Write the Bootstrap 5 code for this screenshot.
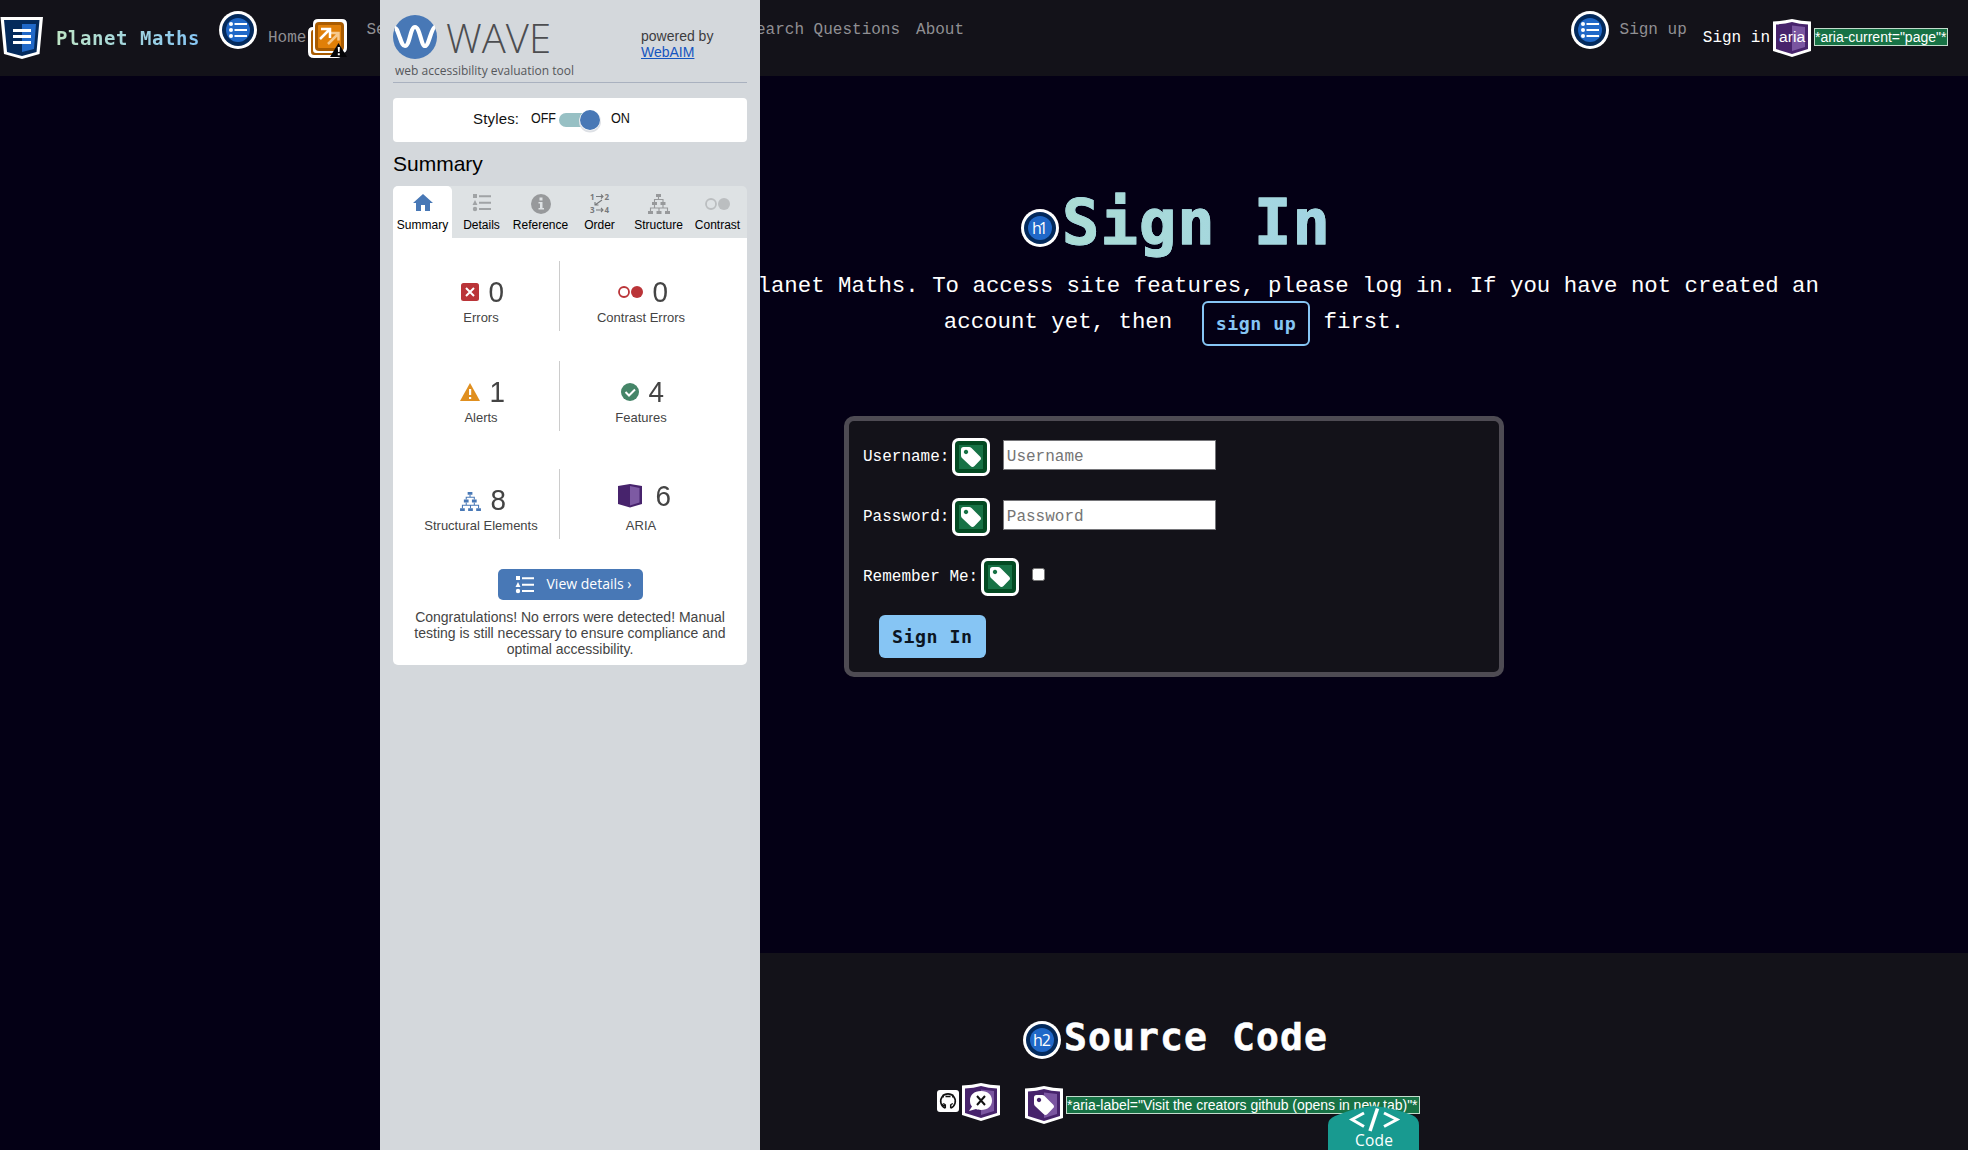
<!DOCTYPE html>
<html lang="en">
<head>
<meta charset="utf-8">
<title>Planet Maths - Sign In</title>
<link href="https://cdn.jsdelivr.net/npm/bootstrap@5.3.0/dist/css/bootstrap.min.css" rel="stylesheet">
<style>
body{background:#040015;color:#fff;font-family:"Liberation Mono",monospace;font-size:16px;height:1150px;overflow:hidden}
svg{flex:none;display:block}
.ic{width:38px;height:38px}
.topnav{background:#131219;height:76px}
.site-name{font:bold 19px/30px "DejaVu Sans Mono",monospace;letter-spacing:.56px;padding:23px 0 0 13px;width:163px}
.site-name span{background:linear-gradient(90deg,#bfe5c6,#86c5f4);-webkit-background-clip:text;color:transparent}
.nav-txt{color:#908f93;line-height:24px;padding-top:18px}
.nav-low{padding-top:26px}
.note-tag{background:#177245;border:1px solid #c3dccd;color:#fff;font:14px/16px "Liberation Sans",sans-serif;white-space:nowrap;height:18px;overflow:hidden;letter-spacing:-.02px}
.page-body{margin-left:380px;height:877px}
.hero-title{font:bold 62px/76px "DejaVu Sans Mono",monospace;letter-spacing:1.07px;margin:0;padding-top:1px}
.hero-title span{background:linear-gradient(90deg,#abdcd4,#a1d4e4);-webkit-background-clip:text;color:transparent;-webkit-text-stroke:1px #a6d8dc}
.intro{font-size:22.4px;line-height:36px;margin:0 auto;width:1300px}
.line-one{padding-right:5px}
.line-two{height:45px}
.line-two>span{padding-top:3px}
.btn-line{border:2px solid #86c5f4;color:#86c5f4;font:bold 18.3px/28.8px "DejaVu Sans Mono",monospace;letter-spacing:.5px;border-radius:6px;padding:7px 12px 5px;margin:0 13.4px 0 29.4px}
.login-card{width:660px;height:261px;border:5px solid #4e4b53;border-radius:10px;background:#131219;margin:70px auto 0;padding:17px 14px}
.login-card .fld{height:60px}
.login-card label{line-height:24px;padding-top:7px;margin-right:2.4px}
.fld input[type=text]{width:213px;height:30px;border:1px solid #76767a;border-radius:0;background:#fff;padding:3px 3px 0;margin:2px 0 0 13px;color:#222}
.fld input::placeholder{color:#757575;opacity:1}
.chk{width:13px;height:13px;background:#fff;border:1px solid #767676;border-radius:2.5px;margin:10px 0 0 13px}
.btn-fill{background:#86c5f4;color:#0b1522;font:bold 18.3px/28.8px "DejaVu Sans Mono",monospace;letter-spacing:.5px;border-radius:6px;padding:8px 13px 6px;border:0;margin:-3px 0 0 16px;height:43px}
.foot{margin-left:380px;background:#131219;height:197px}
.foot h2{font:bold 38px/48px "DejaVu Sans Mono",monospace;letter-spacing:1.12px;margin:0;-webkit-text-stroke:.6px #fff}
.wave{position:absolute;left:380px;top:0;width:380px;height:1150px;background:#d4d8dc;padding:0 13px;color:#444;font-family:"Liberation Sans",sans-serif}
.wave-head{height:83px;border-bottom:1px solid #a9b1bf}
.powered{font-size:14px;line-height:16px;padding-top:28px;width:106px;color:#3c3c3f}
.powered a{color:#1455c0}
.switch-box{background:#fff;height:44px;border-radius:4px;margin-top:15px;color:#111}
.sum-title{font-size:21px;line-height:25px;color:#000;margin:9px 0 10px}
.tabs6{background:#dee2e4;border-radius:5px 5px 0 0;height:52px}
.tabs6>div{width:59px;font-size:12px;line-height:14px;color:#000;padding-top:6px;white-space:nowrap}
.tabs6>div:first-child{background:#fff;border-radius:5px 5px 0 0}
.tabs6 svg{height:24px;margin-bottom:2px}
.panel{background:#fff;height:427px;border-radius:0 0 5px 5px;padding-top:23px}
.pair{height:70px;margin-bottom:30px}
.pair>div{width:162px}
.pair .stem{border-right:1px solid #ccc;width:167px;height:70px;padding-left:10px}
.pair .stem,.pair .side{padding-top:16px}
.num{font-size:30px;line-height:30px;color:#444;margin-left:9px;display:inline-block;transform:scaleX(.93)}
.cap{font-size:13px;line-height:18px;margin-top:2px}
.details-btn{background:#4878b6;color:#fff;width:145px;height:31px;border-radius:5px;font:14px/28px "Open Sans",sans-serif;margin:0 auto 9px;padding-left:17px}
.congrats{font-size:14px;line-height:16px;text-align:center;white-space:nowrap}
.code-tab{position:absolute;left:1328px;top:1106px;width:92px;height:44px}
</style>
</head>
<body class="position-relative">
<svg width="0" height="0" class="position-absolute">
<symbol id="list" viewBox="0 0 38 38"><circle cx="19" cy="19" r="19" fill="#fff"/><circle cx="19" cy="19" r="16" fill="#042a5c"/><circle cx="19" cy="19" r="12" fill="#2068c8"/><g fill="#fff"><circle cx="12" cy="13" r="2"/><circle cx="12" cy="19" r="2"/><circle cx="12" cy="25" r="2"/><path d="M15.500 12h12.500v2h-12.500zM15.500 18h12.500v2h-12.500zM15.500 24h12.500v2h-12.500z"/></g></symbol>
<symbol id="head" viewBox="0 0 38 38"><circle cx="19" cy="19" r="19" fill="#fff"/><circle cx="19" cy="19" r="16" fill="#042a5c"/><circle cx="19" cy="19" r="12" fill="#2068c8"/></symbol>
<symbol id="shield" viewBox="0 0 38 38"><path d="M0 2.500Q10 2 19 0Q28 2 38 2.500V32L19 38 0 32Z" fill="#fff"/><path d="M3 5.500Q12 5 19 3Q26 5 35 5.500V30L19 35 3 30Z" fill="#47236c"/><path d="M19 6.500L32 8v20L19 32Z" fill="#7a55a0"/></symbol>
<symbol id="tagshape" viewBox="0 0 38 38"><path fill="#fff" fill-rule="evenodd" d="M11.500 9H17Q18.500 9 19.500 10L28 18.500Q30 20.500 28 22.300L22.500 28Q20.500 30 18.500 28L10 20Q9 19 9 17.500V11.500Q9 9 11.500 9ZM14 11.800a2.200 2.200 0 1 0 .01 0Z"/></symbol>
<symbol id="label" viewBox="0 0 38 38"><rect width="38" height="38" rx="6.500" fill="#fff"/><rect x="3" y="3" width="32" height="32" rx="4" fill="#034a22"/><rect x="7" y="7" width="24" height="24" fill="#177245"/><use href="#tagshape"/></symbol>
<symbol id="tree" viewBox="0 0 22 20"><path d="M8 0h5v3H8zM4 8h5v3H4zM12.500 8h5v3h-5zM0 17h5v3H0zM8.500 17h5v3h-5zM17 17h5v3h-5z" fill="currentColor"/><path d="M10.500 3v2.500M6.500 8V5.500h8.500V8M6.500 11v3M15 11v3M2.500 17V14h17v3M11 14v3" stroke="currentColor" stroke-width="1.100" fill="none"/></symbol>
<symbol id="rows" viewBox="0 0 20 18"><path d="M1 0h4v4H1zM3 6l2.500 5h-5zM7 1.200h12v2H7zM7 7.700h12v2H7zM7 14h12v2H7z" fill="currentColor"/><circle cx="3" cy="15" r="2.200" fill="currentColor"/></symbol>
</svg>

<nav class="topnav d-flex align-items-start">
  <svg width="43" height="43" viewBox="0 0 43 43" style="margin-top:17px"><path d="M.5 0h42.500l-3.500 37-17.500 5-18-5Z" fill="#fff"/><path d="M4 3h35.500l-3 32-14.500 4-15-4Z" fill="#042a5c"/><path d="M22 7h14l-2 25-12 3Z" fill="#2068c8"/><path d="M13 12h18v3H13zM13 18h18v3H13zM13 24h18v3H13z" fill="#fff"/></svg>
  <div class="site-name text-nowrap"><span>Planet Maths</span></div>
  <svg class="ic" style="margin:11px 11px 0 13px"><use href="#list"/></svg>
  <span class="nav-txt nav-low">Home</span>
  <svg width="39" height="39" viewBox="0 0 39 39" style="margin:19px 19px 0 2px"><path d="M0 13Q0 8 5 8V5Q5 0 10 0h24q5 0 5 5v24q0 5-5 5 0 5-5 5H6q-6 0-6-6Z" fill="#fff"/><path d="M5 11Q3 11 3 14V33Q3 36 6 36H27Q29 36 29 34H8Q5 34 5 31Z" fill="#a95b00"/><rect x="7" y="3" width="29" height="29" rx="4" fill="#a95b00"/><rect x="10" y="6" width="23" height="23" rx="1" fill="#e07f08"/><path d="M20 25L30 15M23 14h7.500v7.500" fill="none" stroke="#f6c98e" stroke-width="2.500"/><path d="M12 20L21 11M13 10h9v9" fill="none" stroke="#fff" stroke-width="2.500"/><path d="M30.500 24l8.500 14H22Z" fill="#050508"/><path d="M29.700 28h2.200l-.4 5h-1.400zM29.800 34.300h2v2h-2z" fill="#fff"/></svg>
  <span class="nav-txt text-nowrap" style="width:380px">Se</span>
  <span class="nav-txt text-nowrap">Search Questions</span>
  <span class="nav-txt" style="margin-left:16px">About</span>
  <div class="d-flex align-items-start ms-auto" style="padding-right:20px">
    <svg class="ic" style="margin:11px 11px 0 0"><use href="#list"/></svg>
    <span class="nav-txt" style="margin-right:16px">Sign up</span>
    <span class="nav-txt nav-low text-white">Sign in</span>
    <svg class="ic" style="margin:19px 3px 0 3px"><use href="#shield"/><text x="19" y="23" text-anchor="middle" font-family="Liberation Sans" font-size="15.500" textLength="26" fill="#fff">aria</text></svg>
    <span class="note-tag" style="margin-top:28px;width:134px">*aria-current="page"*</span>
  </div>
</nav>

<main class="page-body">
  <div class="d-flex justify-content-center align-items-start" style="padding:108px 0 0 4px;height:192px">
    <svg class="ic" style="margin:25px 3px 0 0"><use href="#head"/><text x="19" y="24.500" text-anchor="middle" font-family="Open Sans" font-size="16" textLength="16" fill="#fff">h1</text></svg>
    <h1 class="hero-title"><span>Sign In</span></h1>
  </div>
  <div class="intro line-one text-end text-nowrap">lanet Maths. To access site features, please log in. If you have not created an</div>
  <div class="intro line-two d-flex justify-content-center align-items-start" style="margin-top:-3px">
    <span>account yet, then</span><a class="btn btn-line" href="#">sign up</a><span>first.</span>
  </div>
  <form class="login-card">
    <div class="fld d-flex align-items-start"><label>Username:</label><svg class="ic"><use href="#label"/></svg><input type="text" placeholder="Username"></div>
    <div class="fld d-flex align-items-start"><label>Password:</label><svg class="ic"><use href="#label"/></svg><input type="text" placeholder="Password"></div>
    <div class="fld d-flex align-items-start"><label>Remember Me:</label><svg class="ic"><use href="#label"/></svg><span class="chk"></span></div>
    <button type="button" class="btn-fill">Sign In</button>
  </form>
</main>

<footer class="foot">
  <div class="d-flex justify-content-center align-items-start" style="padding:60px 0 0 3px;height:130px">
    <svg class="ic" style="margin:8px 3px 0 0"><use href="#head"/><text x="19" y="24.500" text-anchor="middle" font-family="Open Sans" font-size="16" textLength="18" fill="#fff">h2</text></svg>
    <h2>Source Code</h2>
  </div>
  <div class="d-flex align-items-start" style="padding-left:557px">
    <svg width="22" height="22" viewBox="0 0 22 22" style="margin:7px 3px 0 0"><rect width="22" height="22" rx="3" fill="#fff"/><path d="M8.300 18.300v-2.700c-2.500.5-2.700-1-3.500-1.500M8.300 16v-1.500M13.700 18.300v-3.800" fill="none" stroke="#111" stroke-width="1.500"/><path d="M8.300 18A7.300 7.300 0 1 1 13.700 18" fill="none" stroke="#111" stroke-width="1.600"/><path d="M6.300 5.300l2.500 1.200h4.400l2.500-1.200.3 3-.7 4-2 2H8.700l-2-2-.7-4Z" fill="#fff"/><path d="M6.300 4.500v3M15.700 4.500v3M8.500 6.500h5M8.500 14.800L6.200 13.500M13.500 14.800l2.300-1.300" stroke="#111" stroke-width="1.300"/></svg>
    <svg class="ic"><use href="#shield"/><path d="M19 8c7 0 11 4 11 9.500S26 27 19 27c-2 0-3.500-.3-5-.9L7 28l3-4.500C8.500 22 8 20 8 17.500 8 12 12 8 19 8Z" fill="#fff"/><path d="M15 13l8 9M23 13l-8 9" stroke="#111" stroke-width="2"/></svg>
    <svg class="ic" style="margin:3px 3px 0 25px"><use href="#shield"/><use href="#tagshape"/></svg>
    <span class="note-tag" style="margin-top:13px;width:354px">*aria-label="Visit the creators github (opens in new tab)"*</span>
  </div>
</footer>

<aside class="wave">
  <div class="wave-head d-flex justify-content-between">
    <svg width="190" height="82" viewBox="0 0 190 82"><circle cx="22" cy="37" r="22" fill="#4878b6"/><path d="M2 28C4 28 5 33 7 38C9 44 10 46 12 46C17 46 17 27 22 27C27 27 28 46 32 46C36 46 38 28 42 27" fill="none" stroke="#fff" stroke-width="4.200"/><text x="53" y="53" font-family="Open Sans" font-weight="300" font-size="40" textLength="105" lengthAdjust="spacingAndGlyphs" fill="#4c4d50">WAVE</text><text x="2" y="75" font-family="Open Sans" font-size="12" textLength="179" fill="#55575b">web accessibility evaluation tool</text></svg>
    <div class="powered">powered by<br><a href="#">WebAIM</a></div>
  </div>
  <div class="switch-box">
    <svg width="354" height="44" font-family="Liberation Sans" fill="#111"><text x="80" y="26" font-size="15" textLength="46">Styles:</text><text x="138" y="25" font-size="14" textLength="25" lengthAdjust="spacingAndGlyphs">OFF</text><rect x="166" y="15" width="36" height="14" rx="7" fill="#97c0c4"/><circle cx="197" cy="23.500" r="11" fill="#dde0e5"/><circle cx="197" cy="22" r="10.500" fill="#fff"/><circle cx="197" cy="22" r="10" fill="#4878b6"/><text x="218" y="25" font-size="14" textLength="19" lengthAdjust="spacingAndGlyphs">ON</text></svg>
  </div>
  <h2 class="sum-title fw-normal">Summary</h2>
  <div class="tabs6 d-flex">
    <div class="d-flex flex-column align-items-center"><svg width="20" viewBox="0 0 20 24"><path d="M10 2l10 9h-3v8h-5v-6H8v6H3v-8H0Z" fill="#4878b6"/></svg>Summary</div>
    <div class="d-flex flex-column align-items-center"><svg width="20" viewBox="0 -2 20 24" color="#a0a3a5"><use href="#rows" width="20" height="18"/></svg>Details</div>
    <div class="d-flex flex-column align-items-center"><svg width="20" viewBox="0 0 20 24"><circle cx="10" cy="12" r="10" fill="#97999b"/><path d="M8.500 5.500h3v3h-3zM7.500 10h4v6H13v1.500H7.500V16H9v-4.500H7.500z" fill="#dee2e4"/></svg>Reference</div>
    <div class="d-flex flex-column align-items-center"><svg width="20" viewBox="0 0 20 24" font-family="Open Sans" font-weight="bold" font-size="8" fill="#77797b"><text x="0" y="7.500">1</text><text x="14.500" y="7.500">2</text><text x="0" y="21">3</text><text x="14.500" y="21">4</text><path d="M6 4.500h7M11 2.500l2 2-2 2M6 18h7M11 16l2 2-2 2M12 8l-7 5M5 10v3h3.500" fill="none" stroke="#77797b" stroke-width="1.100"/></svg>Order</div>
    <div class="d-flex flex-column align-items-center"><svg width="22" viewBox="0 -2 22 24" color="#97999b"><use href="#tree" width="22" height="20"/></svg>Structure</div>
    <div class="d-flex flex-column align-items-center"><svg width="25" viewBox="0 0 25 24"><circle cx="6" cy="12" r="5" fill="none" stroke="#bbbec0" stroke-width="1.800"/><circle cx="19" cy="12" r="6" fill="#bbbec0"/></svg>Contrast</div>
  </div>
  <div class="panel">
    <div class="pair d-flex">
      <div class="stem d-flex flex-column align-items-center"><div class="d-flex align-items-center ps-1"><svg width="18" height="18"><rect width="18" height="18" rx="2.500" fill="#ba3438"/><path d="M5 5l8 8M13 5l-8 8" stroke="#fff" stroke-width="2"/></svg><span class="num">0</span></div><span class="cap">Errors</span></div>
      <div class="side d-flex flex-column align-items-center"><div class="d-flex align-items-center ps-1"><svg width="25" height="14"><circle cx="6" cy="7" r="5" fill="none" stroke="#ba3438" stroke-width="1.800"/><circle cx="19" cy="7" r="6" fill="#ba3438"/></svg><span class="num">0</span></div><span class="cap">Contrast Errors</span></div>
    </div>
    <div class="pair d-flex" style="margin-bottom:38px">
      <div class="stem d-flex flex-column align-items-center"><div class="d-flex align-items-center ps-1"><svg width="20" height="18"><path d="M10 0l10 18H0Z" fill="#e08f1f"/><path d="M9 6h2.200v6H9zM9 14h2.200v2H9z" fill="#fff"/></svg><span class="num">1</span></div><span class="cap">Alerts</span></div>
      <div class="side d-flex flex-column align-items-center"><div class="d-flex align-items-center ps-1"><svg width="18" height="18"><circle cx="9" cy="9" r="9" fill="#458568"/><path d="M4.500 9l3.500 3.500 6-6" fill="none" stroke="#fff" stroke-width="2"/></svg><span class="num">4</span></div><span class="cap">Features</span></div>
    </div>
    <div class="pair d-flex">
      <div class="stem d-flex flex-column align-items-center"><div class="d-flex align-items-center ps-1"><svg width="21" height="19" color="#4878b6" style="margin-top:3px"><use href="#tree"/></svg><span class="num">8</span></div><span class="cap">Structural Elements</span></div>
      <div class="side d-flex flex-column align-items-center" style="padding-top:12px"><div class="d-flex align-items-center ps-2"><svg width="24" height="24"><path d="M0 2L12 0l12 2v18l-12 3.500L0 20Z" fill="#47236c"/><path d="M12 2l9.500 2v14.500L12 21.500Z" fill="#7d5aa3"/></svg><span class="num" style="margin-left:13px">6</span></div><span class="cap" style="margin-top:6px">ARIA</span></div>
    </div>
    <div class="details-btn d-flex align-items-center"><svg width="20" height="18" style="margin-right:12px"><use href="#rows"/></svg><span class="text-nowrap" style="padding-bottom:2px">View details ›</span></div>
    <div class="congrats">Congratulations! No errors were detected! Manual<br>testing is still necessary to ensure compliance and<br>optimal accessibility.</div>
  </div>
</aside>

<svg class="code-tab" viewBox="0 0 92 44"><path d="M0 44V19Q0 13 7 10Q26 2 45 0Q66 2 84 9Q91 12 91 19V44Z" fill="#189a90"/><path d="M36 7L24 13.500l12 7M56 7l13 6.500-13 7" fill="none" stroke="#fff" stroke-width="3"/><path d="M49.500 2.500L42 25" stroke="#fff" stroke-width="3.500"/><text x="46" y="40" text-anchor="middle" font-family="Open Sans" font-size="15.500" textLength="38" fill="#fff">Code</text></svg>
<script src="https://cdn.jsdelivr.net/npm/bootstrap@5.3.0/dist/js/bootstrap.bundle.min.js"></script>
</body>
</html>
